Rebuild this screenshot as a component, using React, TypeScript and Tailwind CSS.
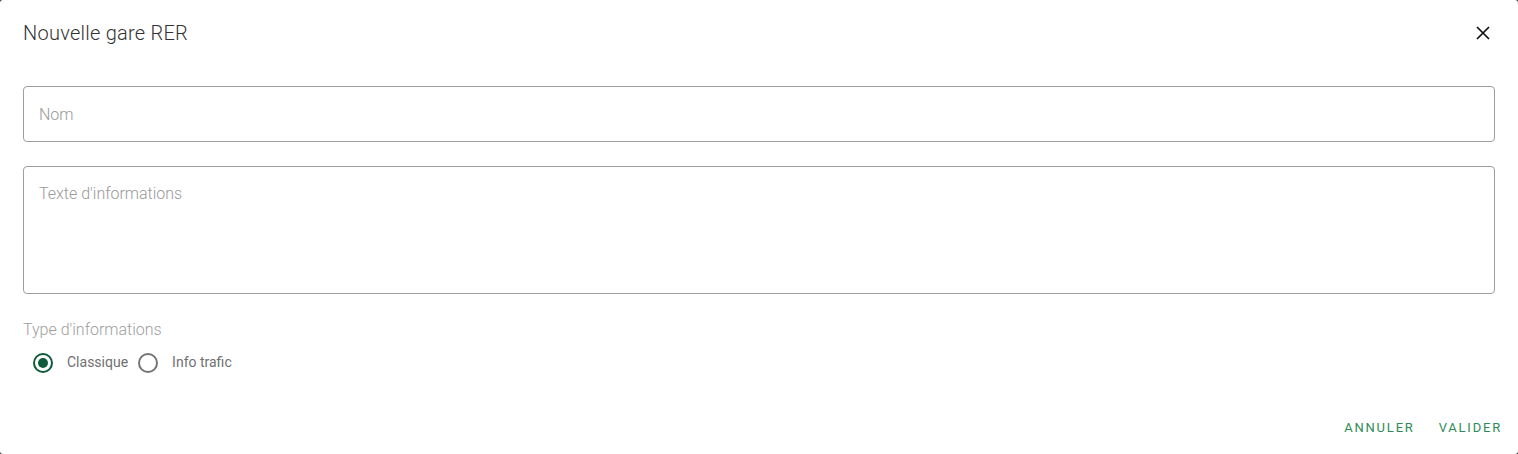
import { useState } from "react";

function Radio({
  label,
  checked,
  onChange,
}: {
  label: string;
  checked: boolean;
  onChange: () => void;
}) {
  return (
    <label className="flex cursor-pointer items-center" onClick={onChange}>
      <span
        className={`grid h-5 w-5 place-items-center rounded-full border-2 ${
          checked ? "border-[#0f5a3c]" : "border-[#757575]"
        }`}
      >
        {checked && <span className="h-[10px] w-[10px] rounded-full bg-[#0f5a3c]" />}
      </span>
      <span className="ml-[14px] text-[14px] text-[#707070]">{label}</span>
    </label>
  );
}

export default function App() {
  const [type, setType] = useState("classique");

  return (
    <div className="bg-[#3a3a3a] font-['Roboto',sans-serif]">
      <div className="flex h-[454px] flex-col rounded-[3px] bg-white">
        <div className="flex items-center justify-between pl-[23px] pr-[28px] pt-[17px]">
          <h2 className="text-[20px] font-light leading-[32px] tracking-[0.25px] text-[#333]">
            Nouvelle gare RER
          </h2>
          <button className="text-[#111]">
            <svg viewBox="0 0 14 14" className="h-[14px] w-[14px]" fill="none">
              <path
                d="M1 1l12 12M13 1L1 13"
                stroke="currentColor"
                strokeWidth="1.7"
              />
            </svg>
          </button>
        </div>

        <div className="mt-[37px] px-[23px]">
          <input
            placeholder="Nom"
            className="h-[56px] w-full rounded-[4px] border border-[#9e9e9e] px-[15px] text-[16px] font-light text-[#333] outline-none placeholder:text-[#999]"
          />
          <textarea
            placeholder="Texte d'informations"
            className="mt-[24px] block h-[128px] w-full resize-none rounded-[4px] border border-[#9e9e9e] px-[15px] pt-[15px] text-[16px] font-light text-[#333] outline-none placeholder:text-[#999]"
          />

          <div className="mt-[26px] text-[16px] font-light leading-[20px] text-[#9e9e9e]">
            Type d'informations
          </div>
          <div className="mt-[12px] flex items-center gap-[10px] pl-[10px]">
            <Radio
              label="Classique"
              checked={type === "classique"}
              onChange={() => setType("classique")}
            />
            <Radio
              label="Info trafic"
              checked={type === "trafic"}
              onChange={() => setType("trafic")}
            />
          </div>
        </div>

        <div className="mt-auto flex justify-end gap-[8px] pb-[8px] pr-[8px]">
          <button className="h-[36px] min-w-[64px] px-[8px] text-[13px] tracking-[1.8px] text-[#2e8b57]">
            ANNULER
          </button>
          <button className="h-[36px] min-w-[64px] px-[8px] text-[13px] tracking-[1.8px] text-[#2e8b57]">
            VALIDER
          </button>
        </div>
      </div>
    </div>
  );
}
